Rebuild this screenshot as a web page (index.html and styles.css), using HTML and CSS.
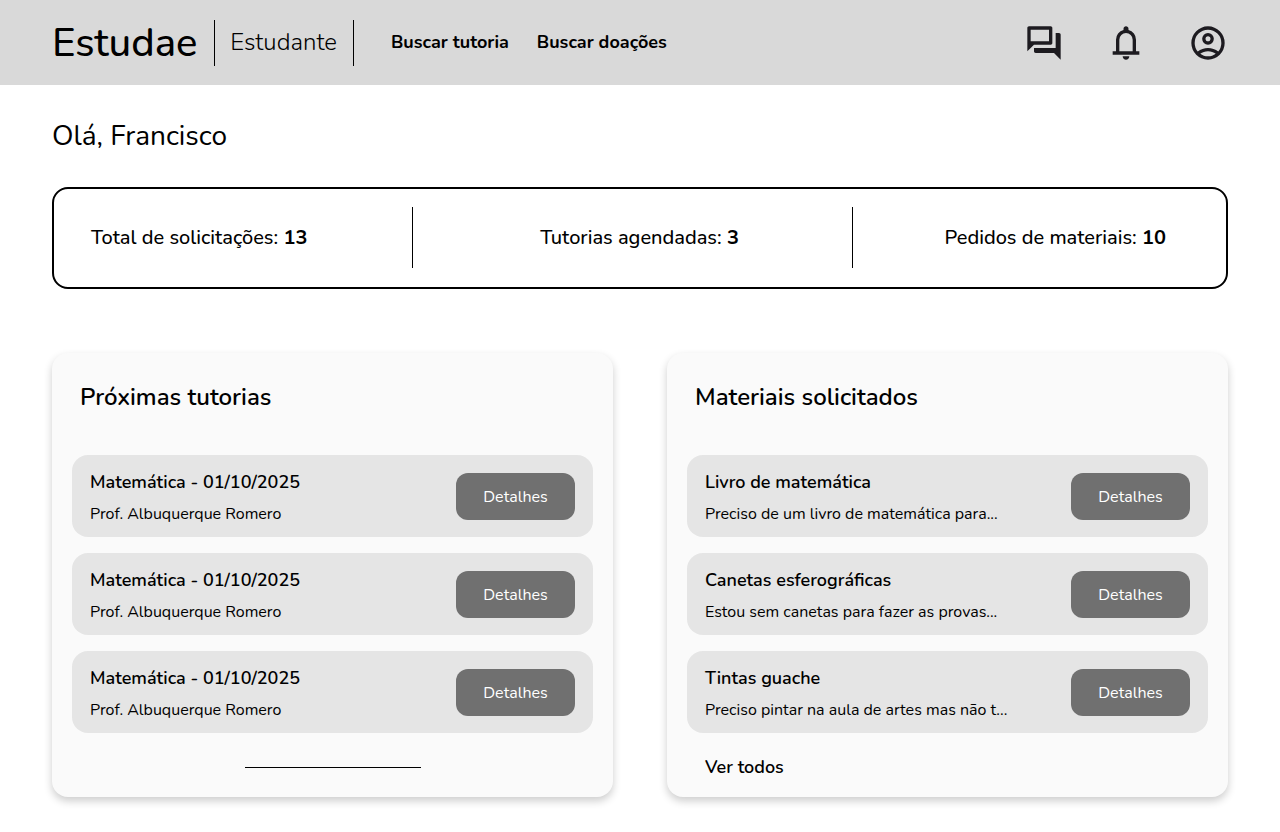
FILE: index.html
```html
<!DOCTYPE html>
<html lang="pt-BR">
<head>
  <meta charset="utf-8">
  <meta name="viewport" content="width=device-width, initial-scale=1">
  <title>Estudae</title>
  <link rel="stylesheet" href="styles.css">
</head>
<body>
  <header class="topbar">
    <a class="brand" href="#">Estudae</a>
    <span class="role">Estudante</span>
    <nav class="nav">
      <a class="nav-link" href="#">Buscar tutoria</a>
      <a class="nav-link" href="#">Buscar doações</a>
    </nav>
    <div class="actions">
      <button class="icon-button" type="button" aria-label="Mensagens">
        <svg class="icon" viewBox="0 -960 960 960" aria-hidden="true"><path d="M280-240q-17 0-28.500-11.500T240-280v-80h520v-360h80q17 0 28.500 11.500T880-680v600L720-240H280ZM80-280v-560q0-17 11.500-28.500T120-880h520q17 0 28.500 11.500T680-840v360q0 17-11.500 28.500T640-440H240L80-280Zm520-240v-280H160v280h440Z"/></svg>
      </button>
      <button class="icon-button" type="button" aria-label="Notificações">
        <svg class="icon" viewBox="0 -960 960 960" aria-hidden="true"><path d="M160-200v-80h80v-280q0-83 50-147.500T420-792v-28q0-25 17.500-42.500T480-880q25 0 42.500 17.500T540-820v28q80 20 130 84.500T720-560v280h80v80H160ZM480-80q-33 0-56.500-23.500T400-160h160q0 33-23.500 56.500T480-80ZM320-280h320v-280q0-66-47-113t-113-47q-66 0-113 47t-47 113v280Z"/></svg>
      </button>
      <button class="icon-button" type="button" aria-label="Perfil">
        <svg class="icon" viewBox="0 -960 960 960" aria-hidden="true"><path d="M234-276q51-39 114-61.500T480-360q69 0 132 22.500T726-276q35-41 54.500-93T800-480q0-133-93.500-226.500T480-800q-133 0-226.500 93.500T160-480q0 59 19.500 111t54.500 93Zm246-164q-59 0-99.500-40.500T340-580q0-59 40.500-99.500T480-720q59 0 99.500 40.500T620-580q0 59-40.500 99.500T480-440Zm0 360q-83 0-156-31.500T197-197q-54-54-85.500-127T80-480q0-83 31.500-156T197-763q54-54 127-85.500T480-880q83 0 156 31.500T763-763q54 54 85.500 127T880-480q0 83-31.500 156T763-197q-54 54-127 85.500T480-80Zm0-80q53 0 100-15.500t86-44.500q-39-29-86-44.500T480-280q-53 0-100 15.500T294-220q39 29 86 44.500T480-160Zm0-360q26 0 43-17t17-43q0-26-17-43t-43-17q-26 0-43 17t-17 43q0 26 17 43t43 17Z"/></svg>
      </button>
    </div>
  </header>

  <main class="page">
    <h1 class="greeting">Olá, Francisco</h1>

    <section class="stats" aria-label="Resumo">
      <p class="stat stat-first">Total de solicitações: <strong>13</strong></p>
      <p class="stat stat-middle">Tutorias agendadas: <strong>3</strong></p>
      <p class="stat stat-last">Pedidos de materiais: <strong>10</strong></p>
    </section>

    <div class="cards">
      <section class="card">
        <h2 class="card-title">Próximas tutorias</h2>
        <ul class="list">
          <li class="item">
            <div class="item-text">
              <h3 class="item-title">Matemática - 01/10/2025</h3>
              <p class="item-note">Prof. Albuquerque Romero</p>
            </div>
            <button class="details" type="button">Detalhes</button>
          </li>
          <li class="item">
            <div class="item-text">
              <h3 class="item-title">Matemática - 01/10/2025</h3>
              <p class="item-note">Prof. Albuquerque Romero</p>
            </div>
            <button class="details" type="button">Detalhes</button>
          </li>
          <li class="item">
            <div class="item-text">
              <h3 class="item-title">Matemática - 01/10/2025</h3>
              <p class="item-note">Prof. Albuquerque Romero</p>
            </div>
            <button class="details" type="button">Detalhes</button>
          </li>
        </ul>
        <div class="card-footer"><hr class="rule"></div>
      </section>

      <section class="card">
        <h2 class="card-title">Materiais solicitados</h2>
        <ul class="list">
          <li class="item">
            <div class="item-text">
              <h3 class="item-title">Livro de matemática</h3>
              <p class="item-note">Preciso de um livro de matemática para...</p>
            </div>
            <button class="details" type="button">Detalhes</button>
          </li>
          <li class="item">
            <div class="item-text">
              <h3 class="item-title">Canetas esferográficas</h3>
              <p class="item-note">Estou sem canetas para fazer as provas...</p>
            </div>
            <button class="details" type="button">Detalhes</button>
          </li>
          <li class="item">
            <div class="item-text">
              <h3 class="item-title">Tintas guache</h3>
              <p class="item-note">Preciso pintar na aula de artes mas não t...</p>
            </div>
            <button class="details" type="button">Detalhes</button>
          </li>
        </ul>
        <div class="card-footer"><a class="see-all" href="#">Ver todos</a></div>
      </section>
    </div>
  </main>
</body>
</html>
```
FILE: styles.css
```css
* {
  box-sizing: border-box;
}

body {
  margin: 0;
  background: #fff;
  color: #000;
  font-family: Nunito, Lato, "Open Sans", sans-serif;
  font-size: 16px;
}

h1, h2, h3, p, ul {
  margin: 0;
  padding: 0;
}

a {
  color: inherit;
  text-decoration: none;
}

button {
  font: inherit;
  border: 0;
  cursor: pointer;
}

.topbar {
  display: flex;
  align-items: center;
  min-height: 85px;
  padding: 0 52px;
  background: #d9d9d9;
}

.brand {
  padding-right: 17px;
  font-size: 40px;
  font-weight: 500;
  line-height: 46px;
}

.role {
  padding: 0 16px 2px 15px;
  border: solid #000;
  border-width: 0 1px;
  font-size: 24px;
  font-weight: 300;
  line-height: 44px;
}

.nav {
  display: flex;
  gap: 28px;
  padding: 0 0 2px 37px;
}

.nav-link {
  font-size: 18px;
  font-weight: 700;
  line-height: 24px;
}

.actions {
  display: flex;
  gap: 42px;
  margin-left: auto;
}

.icon-button {
  width: 40px;
  height: 40px;
  padding: 0;
  background: none;
}

.icon {
  display: block;
  width: 100%;
  height: 100%;
  fill: #1d1b20;
}

.page {
  padding: 32px 52px 35px;
}

.greeting {
  font-size: 28px;
  font-weight: 400;
  line-height: 38px;
}

.stats {
  display: grid;
  grid-template-columns: 359fr 440fr 373fr;
  margin-top: 32px;
  padding: 18px 0 19px;
  border: 2px solid #000;
  border-radius: 16px;
}

.stat {
  font-size: 20px;
  font-weight: 500;
  line-height: 61px;
}

.stat-first {
  padding-left: 37px;
  border-right: 1px solid #000;
}

.stat-middle {
  padding-left: 14px;
  border-right: 1px solid #000;
  text-align: center;
}

.stat-last {
  padding-right: 60px;
  text-align: right;
}

.cards {
  display: grid;
  grid-template-columns: 1fr 1fr;
  gap: 54px;
  margin-top: 64px;
}

.card {
  padding: 28px 20px 14px;
  border-radius: 16px;
  background: #fafafa;
  box-shadow: 0 4px 8px rgba(0, 0, 0, 0.2);
}

.card-title {
  padding-left: 8px;
  font-size: 24px;
  font-weight: 600;
  line-height: 32px;
}

.list {
  display: grid;
  gap: 16px;
  margin-top: 42px;
  list-style: none;
}

.item {
  display: flex;
  align-items: center;
  justify-content: space-between;
  padding: 10px 18px;
  border-radius: 16px;
  background: #e5e5e5;
}

.item-text {
  display: grid;
  gap: 4px;
  padding-top: 2px;
}

.item-title {
  font-size: 18px;
  font-weight: 600;
  line-height: 30px;
}

.item-note {
  font-size: 16px;
  line-height: 26px;
}

.details {
  width: 119px;
  height: 47px;
  padding: 2px 0 0;
  border-radius: 12px;
  background: #707070;
  color: #fff;
}

.card-footer {
  display: flex;
  align-items: center;
  height: 32px;
  margin-top: 18px;
  padding: 0 18px;
}

.rule {
  width: 176px;
  height: 1px;
  margin: 0 auto;
  border: 0;
  background: #000;
}

.see-all {
  font-size: 18px;
  font-weight: 600;
}
```
